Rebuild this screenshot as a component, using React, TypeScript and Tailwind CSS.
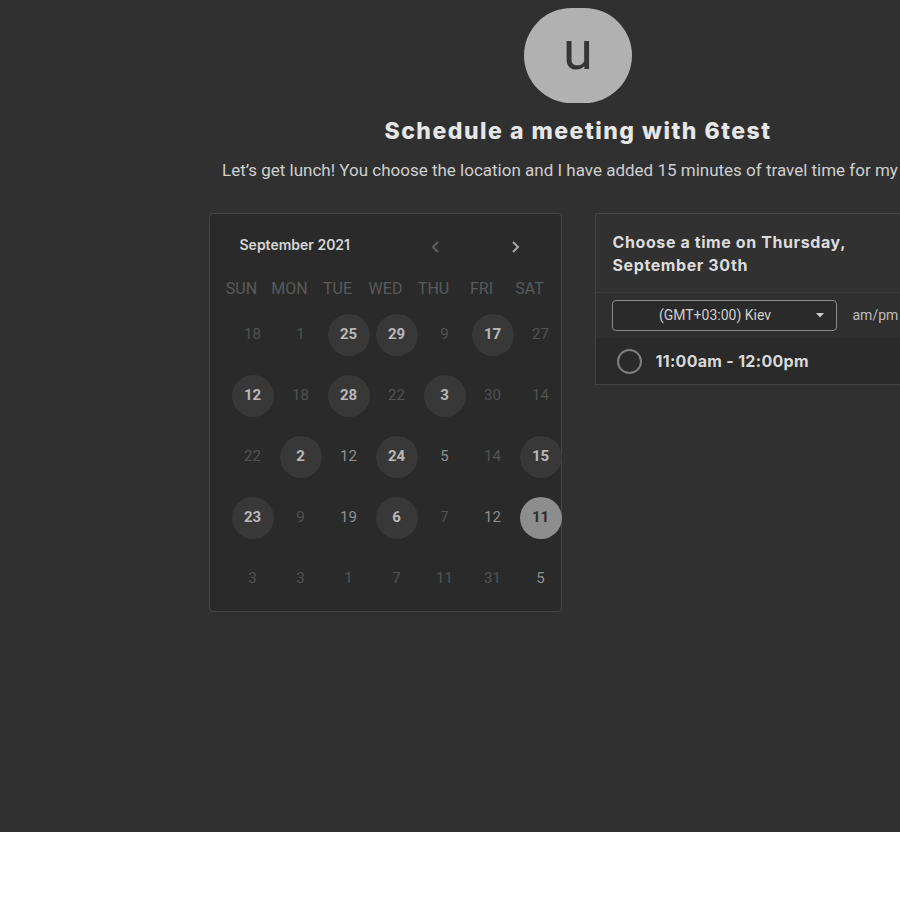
import React from "react";

type Day = { n: number; kind: "dim" | "mid" | "hl" | "sel" };

const weekdays = ["SUN", "MON", "TUE", "WED", "THU", "FRI", "SAT"];

const d = (n: number, kind: Day["kind"] = "dim"): Day => ({ n, kind });

const weeks: Day[][] = [
  [d(18), d(1), d(25, "hl"), d(29, "hl"), d(9), d(17, "hl"), d(27)],
  [d(12, "hl"), d(18), d(28, "hl"), d(22), d(3, "hl"), d(30), d(14)],
  [d(22), d(2, "hl"), d(12, "mid"), d(24, "hl"), d(5, "mid"), d(14), d(15, "hl")],
  [d(23, "hl"), d(9), d(19, "mid"), d(6, "hl"), d(7), d(12, "mid"), d(11, "sel")],
  [d(3), d(3), d(1), d(7), d(11), d(31), d(5, "mid")],
];

function DayCell({ day }: { day: Day }) {
  const base =
    "w-[42px] h-[42px] rounded-full flex items-center justify-center text-[15px]";
  if (day.kind === "hl") {
    return (
      <div className={`${base} bg-[#383838] font-bold text-[#b8b8b8]`}>
        {day.n}
      </div>
    );
  }
  if (day.kind === "sel") {
    return (
      <div className={`${base} bg-[#8d8d8d] font-bold text-[#2e2e2e]`}>
        {day.n}
      </div>
    );
  }
  if (day.kind === "mid") {
    return <div className={`${base} text-[#8f8f8f]`}>{day.n}</div>;
  }
  return <div className={`${base} text-[#525252]`}>{day.n}</div>;
}

function Calendar() {
  return (
    <div className="w-[353px] h-[399px] shrink-0 rounded-sm border border-[#464646] bg-[#2a2a2a] font-['Roboto',sans-serif]">
      <div className="mt-[21px] flex h-[18px] items-center">
        <span className="pl-[30px] font-['Inter',sans-serif] text-[14px] font-semibold text-[#d6d6d6]">
          September 2021
        </span>
        <svg
          className="ml-[80px] mt-[5px]"
          width="12"
          height="14"
          viewBox="0 0 12 14"
          fill="none"
          stroke="#5e5e5e"
          strokeWidth="2"
        >
          <path d="M8 2 L3 7 L8 12" />
        </svg>
        <svg
          className="ml-[67px] mt-[5px]"
          width="12"
          height="14"
          viewBox="0 0 12 14"
          fill="none"
          stroke="#a8a8a8"
          strokeWidth="2"
        >
          <path d="M4 2 L9 7 L4 12" />
        </svg>
      </div>
      <div className="mt-[26px] grid grid-cols-[repeat(7,48px)] pl-[8px]">
        {weekdays.map((w) => (
          <div
            key={w}
            className="flex h-[20px] items-center justify-center text-[16px] text-[#5a5a5a]"
          >
            {w}
          </div>
        ))}
      </div>
      <div className="mt-[5px] grid grid-cols-[repeat(7,48px)] pl-[19px]">
        {weeks.flat().map((day, i) => (
          <div key={i} className="flex h-[61px] items-center justify-center">
            <DayCell day={day} />
          </div>
        ))}
      </div>
    </div>
  );
}

function TimePanel() {
  return (
    <div className="w-[353px] shrink-0 self-start border border-[#444444] bg-[#2c2c2c]">
      <div className="border-b border-[#3c3c3c] bg-[#313131] px-[17px] pt-[17px] pb-[15px] font-['Inter',sans-serif] text-[16px] leading-[23px] font-bold tracking-[0.6px] text-[#dcdcdc]">
        Choose a time on Thursday,
        <br />
        September 30th
      </div>
      <div className="flex items-center bg-[#2f2f2f] py-[7px] pl-[16px] font-['Roboto',sans-serif] text-[14px]">
        <div className="relative flex h-[31px] w-[225px] items-center justify-center rounded-sm border border-[#8c8c8c] bg-[#2a2a2a] text-[#cfcfcf]">
          <span className="-ml-[18px]">(GMT+03:00) Kiev</span>
          <svg
            className="absolute right-[12px] top-[12px]"
            width="8"
            height="5"
            viewBox="0 0 8 5"
          >
            <path d="M0 0 L8 0 L4 4.5 Z" fill="#cfcfcf" />
          </svg>
        </div>
        <span className="ml-[16px] text-[#bdbdbd]">am/pm</span>
      </div>
      <div className="flex h-[46px] items-center bg-[#2a2a2a] pl-[21px]">
        <div className="h-[25px] w-[25px] rounded-full border-2 border-[#7e7e7e]" />
        <span className="ml-[14px] font-['Inter',sans-serif] text-[16px] font-bold tracking-[0.3px] text-[#d8d8d8]">
          11:00am - 12:00pm
        </span>
      </div>
    </div>
  );
}

export default function App() {
  return (
    <div className="h-[900px] w-[900px] overflow-hidden bg-white">
      <div className="h-[832px] overflow-hidden bg-[#303030]">
        <div className="flex w-[1156px] flex-col items-center pt-[8px]">
          <div className="flex h-[95px] w-[108px] items-center justify-center rounded-full bg-[#b1b1b1]">
            <span className="-mt-[10px] font-['Roboto',sans-serif] text-[54px] leading-none text-[#353535]">
              u
            </span>
          </div>
          <h1 className="mt-[14px] font-['Inter',sans-serif] text-[23px] leading-[28px] font-extrabold tracking-[1.5px] text-[#e6e6e6]">
            Schedule a meeting with 6test
          </h1>
          <p className="mt-[14px] self-stretch pl-[222px] font-['Roboto',sans-serif] text-[17px] leading-[22px] whitespace-nowrap text-[#cfcfcf]">
            Let’s get lunch! You choose the location and I have added 15 minutes
            of travel time for my commute.
          </p>
          <div className="mt-[32px] flex gap-[33px]">
            <Calendar />
            <TimePanel />
          </div>
        </div>
      </div>
    </div>
  );
}
